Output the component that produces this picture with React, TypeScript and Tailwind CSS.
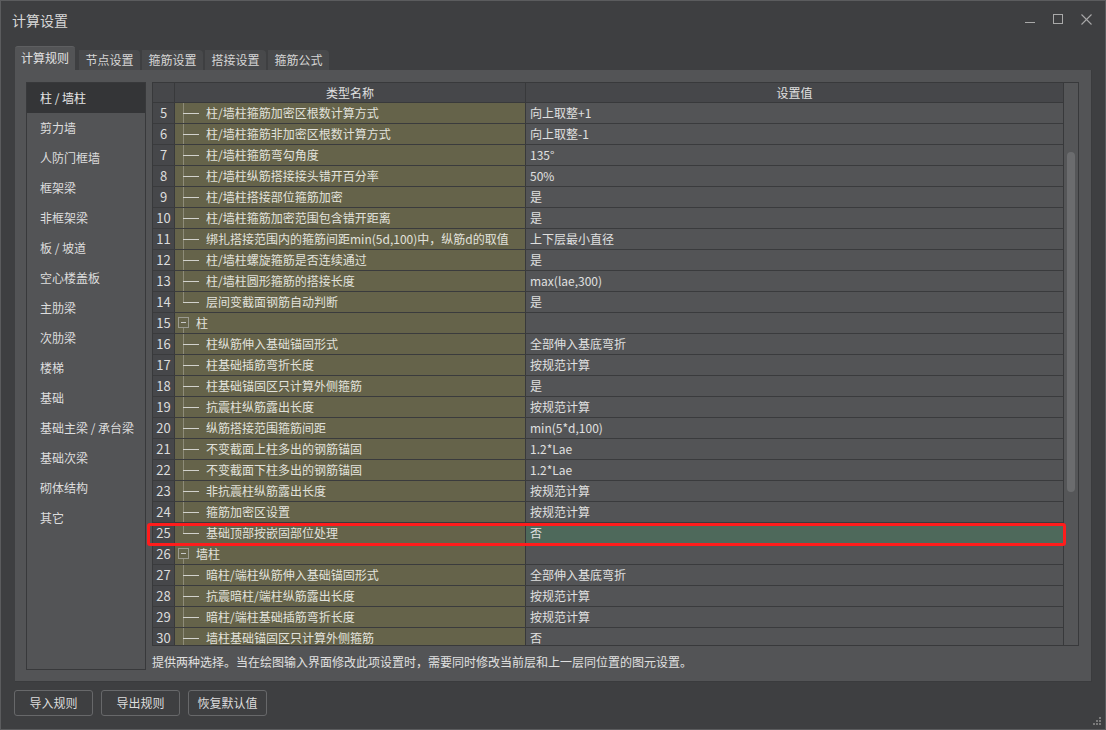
import React from "react";

type Row =
  | { n: number; kind: "item"; name: string; value: string; last?: boolean; hl?: boolean }
  | { n: number; kind: "group"; name: string };

const rows: Row[] = [
  { n: 5, kind: "item", name: "柱/墙柱箍筋加密区根数计算方式", value: "向上取整+1" },
  { n: 6, kind: "item", name: "柱/墙柱箍筋非加密区根数计算方式", value: "向上取整-1" },
  { n: 7, kind: "item", name: "柱/墙柱箍筋弯勾角度", value: "135°" },
  { n: 8, kind: "item", name: "柱/墙柱纵筋搭接接头错开百分率", value: "50%" },
  { n: 9, kind: "item", name: "柱/墙柱搭接部位箍筋加密", value: "是" },
  { n: 10, kind: "item", name: "柱/墙柱箍筋加密范围包含错开距离", value: "是" },
  { n: 11, kind: "item", name: "绑扎搭接范围内的箍筋间距min(5d,100)中，纵筋d的取值", value: "上下层最小直径" },
  { n: 12, kind: "item", name: "柱/墙柱螺旋箍筋是否连续通过", value: "是" },
  { n: 13, kind: "item", name: "柱/墙柱圆形箍筋的搭接长度", value: "max(lae,300)" },
  { n: 14, kind: "item", name: "层间变截面钢筋自动判断", value: "是", last: true },
  { n: 15, kind: "group", name: "柱" },
  { n: 16, kind: "item", name: "柱纵筋伸入基础锚固形式", value: "全部伸入基底弯折" },
  { n: 17, kind: "item", name: "柱基础插筋弯折长度", value: "按规范计算" },
  { n: 18, kind: "item", name: "柱基础锚固区只计算外侧箍筋", value: "是" },
  { n: 19, kind: "item", name: "抗震柱纵筋露出长度", value: "按规范计算" },
  { n: 20, kind: "item", name: "纵筋搭接范围箍筋间距", value: "min(5*d,100)" },
  { n: 21, kind: "item", name: "不变截面上柱多出的钢筋锚固", value: "1.2*Lae" },
  { n: 22, kind: "item", name: "不变截面下柱多出的钢筋锚固", value: "1.2*Lae" },
  { n: 23, kind: "item", name: "非抗震柱纵筋露出长度", value: "按规范计算" },
  { n: 24, kind: "item", name: "箍筋加密区设置", value: "按规范计算" },
  { n: 25, kind: "item", name: "基础顶部按嵌固部位处理", value: "否", last: true, hl: true },
  { n: 26, kind: "group", name: "墙柱" },
  { n: 27, kind: "item", name: "暗柱/端柱纵筋伸入基础锚固形式", value: "全部伸入基底弯折" },
  { n: 28, kind: "item", name: "抗震暗柱/端柱纵筋露出长度", value: "按规范计算" },
  { n: 29, kind: "item", name: "暗柱/端柱基础插筋弯折长度", value: "按规范计算" },
  { n: 30, kind: "item", name: "墙柱基础锚固区只计算外侧箍筋", value: "否" },
];

const listItems = [
  "柱 / 墙柱",
  "剪力墙",
  "人防门框墙",
  "框架梁",
  "非框架梁",
  "板 / 坡道",
  "空心楼盖板",
  "主肋梁",
  "次肋梁",
  "楼梯",
  "基础",
  "基础主梁 / 承台梁",
  "基础次梁",
  "砌体结构",
  "其它",
];

const tabs = ["节点设置", "箍筋设置", "搭接设置", "箍筋公式"];

function TreeItem({ last }: { last?: boolean }) {
  return (
    <svg width="31" height="20" className="shrink-0" viewBox="0 0 31 20">
      <line x1="8.5" y1="0" x2="8.5" y2={last ? 10.5 : 20} stroke="#8d8b78" strokeWidth="1" />
      <line x1="8" y1="10.5" x2="24" y2="10.5" stroke="#d2d2cc" strokeWidth="1" />
    </svg>
  );
}

function TreeGroup() {
  return (
    <svg width="21" height="20" className="shrink-0" viewBox="0 0 21 20">
      <rect x="3.5" y="4.5" width="10" height="10" fill="none" stroke="#9a9a90" strokeWidth="1" />
      <line x1="6" y1="9.5" x2="11" y2="9.5" stroke="#c8c8c8" strokeWidth="1" />
      <line x1="8.5" y1="15" x2="8.5" y2="20" stroke="#8d8b78" strokeWidth="1" />
    </svg>
  );
}

export default function App() {
  return (
    <div className="relative w-[1106px] h-[730px] bg-[#3e3f41] border border-[#5b5c5e] flex flex-col font-['Noto_Sans_CJK_SC','Noto_Sans',sans-serif] text-[12px] text-[#dcdcdc] overflow-hidden select-none">
      {/* Title bar */}
      <div className="flex justify-between h-[45px] shrink-0">
        <div className="pl-[11px] pt-[10px] text-[14px] leading-[18px] text-[#d8d8d8]">计算设置</div>
        <div className="flex items-start pt-[13px] pr-[13px] gap-[18px]">
          <svg width="10" height="10" viewBox="0 0 10 10">
            <line x1="0" y1="8.5" x2="10" y2="8.5" stroke="#a9a9a9" strokeWidth="1" />
          </svg>
          <svg width="10" height="10" viewBox="0 0 10 10">
            <rect x="0.5" y="0.5" width="9" height="9" fill="none" stroke="#a9a9a9" strokeWidth="1" />
          </svg>
          <svg width="11" height="11" viewBox="0 0 11 11">
            <line x1="0.5" y1="0.5" x2="10.5" y2="10.5" stroke="#a9a9a9" strokeWidth="1.1" />
            <line x1="10.5" y1="0.5" x2="0.5" y2="10.5" stroke="#a9a9a9" strokeWidth="1.1" />
          </svg>
        </div>
      </div>

      {/* Tabs */}
      <div className="flex items-end h-[24px] pl-[14px] shrink-0">
        <div className="w-[60px] h-[24px] bg-[#535456] rounded-t-[3px] border-t border-[#5e5f61] flex items-center justify-center leading-[16px] text-[#e2e2e2] pb-[2px]">
          计算规则
        </div>
        {tabs.map((t, i) => (
          <div
            key={t}
            className={
              (i === 0 ? "ml-[4px] " : "ml-[2px] ") +
              "w-[61px] h-[20px] bg-[#48494b] rounded-tr-[4px] flex items-center justify-center leading-[16px] text-[#d6d6d6]"
            }
          >
            {t}
          </div>
        ))}
      </div>

      {/* Panel */}
      <div className="ml-[14px] w-[1077px] h-[612px] bg-[#535456] border-r border-b border-[#3a3b3d] flex pt-[12px] pl-[11px] shrink-0">
        {/* Left list */}
        <div className="w-[120px] h-[588px] border border-[#38393b] bg-[#535456] flex flex-col">
          {listItems.map((it, i) => (
            <div
              key={it}
              className={
                (i === 0 ? "bg-[#343537] text-[#e6e6e6] " : "text-[#dedede] ") +
                "h-[30px] leading-[30px] pl-[13px] whitespace-nowrap"
              }
            >
              {it}
            </div>
          ))}
        </div>

        {/* Right side */}
        <div className="ml-[6px] w-[927px] flex flex-col">
          <div className="relative w-[927px] h-[564px]">
            <div className="w-full h-full border border-[#38393b] flex overflow-hidden">
              <div className="w-[910px] flex flex-col">
                {/* header */}
                <div className="flex h-[20px] shrink-0 border-b border-[#38393b] bg-[#46474a]">
                  <div className="w-[22px] border-r border-[#38393b]" />
                  <div className="w-[351px] border-r border-[#38393b] text-center leading-[19px] text-[#e0e0e0]">类型名称</div>
                  <div className="flex-1 text-center leading-[19px] text-[#e0e0e0]">设置值</div>
                </div>
                {rows.map((r) => (
                  <div key={r.n} className="flex h-[21px] shrink-0 border-b border-[#3a3b3d]">
                    <div className="w-[22px] border-r border-[#38393b] bg-[#46474a] text-center leading-[20px] text-[13px] text-[#dcdcdc]">
                      {r.n}
                    </div>
                    <div className="w-[351px] border-r border-[#38393b] bg-[#65634a] flex items-start whitespace-nowrap overflow-hidden">
                      {r.kind === "group" ? <TreeGroup /> : <TreeItem last={r.last} />}
                      <span className="leading-[20px] text-[#e2e2dc]">{r.name}</span>
                    </div>
                    <div
                      className={
                        (r.kind === "item" && r.hl ? "bg-[#4e695b] " : "bg-[#535456] ") +
                        "flex-1 pl-[4px] leading-[20px] text-[#e0e0e0] whitespace-nowrap"
                      }
                    >
                      {r.kind === "item" ? r.value : ""}
                    </div>
                  </div>
                ))}
              </div>
              {/* scrollbar */}
              <div className="w-[15px] border-l border-[#38393b] bg-[#555658] pl-[3px] pt-[69px]">
                <div className="w-[8px] h-[340px] rounded-full bg-[#6b6c6e]" />
              </div>
            </div>
            {/* red annotation box */}
            <div className="absolute left-[-5px] top-[441px] w-[919px] h-[23px] border-[3px] border-[#ff1c1c] rounded-[3px] pointer-events-none" />
          </div>
          <div className="mt-[8px] leading-[16px] text-[#e0e0e0] whitespace-nowrap">
            提供两种选择。当在绘图输入界面修改此项设置时，需要同时修改当前层和上一层同位置的图元设置。
          </div>
        </div>
      </div>

      {/* Buttons */}
      <div className="flex gap-[8px] pl-[13px] mt-[8px]">
        {["导入规则", "导出规则", "恢复默认值"].map((b) => (
          <div
            key={b}
            className="w-[79px] h-[26px] border border-[#67686a] rounded-[3px] flex items-center justify-center text-[#dcdcdc] leading-[16px]"
          >
            {b}
          </div>
        ))}
      </div>

      {/* resize grip */}
      <svg className="absolute right-[3px] bottom-[3px]" width="9" height="9" viewBox="0 0 9 9">
        <rect x="6" y="0" width="2" height="2" fill="#7a7a7a" />
        <rect x="3" y="3" width="2" height="2" fill="#7a7a7a" />
        <rect x="6" y="3" width="2" height="2" fill="#7a7a7a" />
        <rect x="0" y="6" width="2" height="2" fill="#7a7a7a" />
        <rect x="3" y="6" width="2" height="2" fill="#7a7a7a" />
        <rect x="6" y="6" width="2" height="2" fill="#7a7a7a" />
      </svg>
    </div>
  );
}
